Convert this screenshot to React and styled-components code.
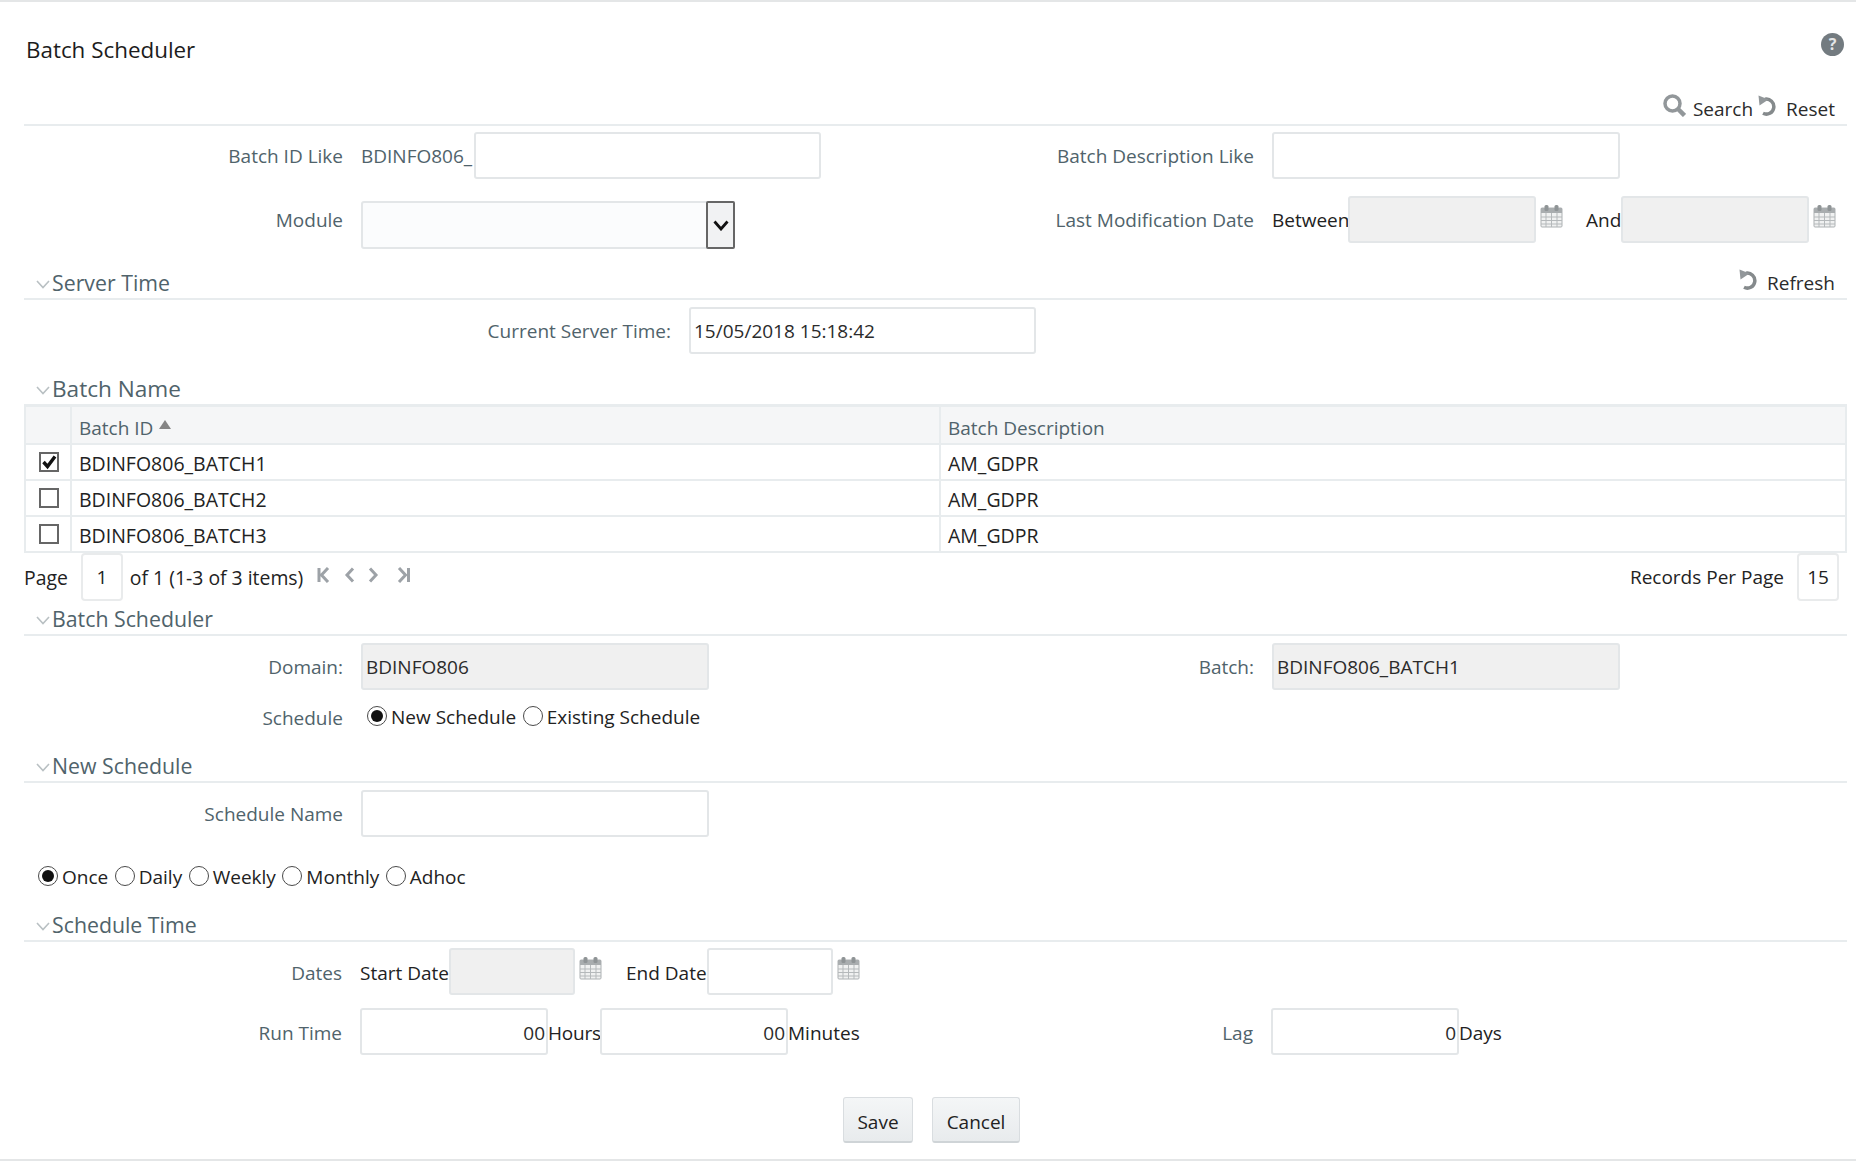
import React from 'react';
import styled, { createGlobalStyle } from 'styled-components';

const GlobalStyle = createGlobalStyle`
  html, body { margin: 0; padding: 0; background: #fff; }
  body { font-family: "Open Sans", "Noto Sans", sans-serif; font-size: 19px; color: #222; }
`;

const slate = '#50636b';
const line = '#e8ecee';

const Page = styled.div`
  box-sizing: border-box;
  height: 1161px;
  padding: 0 9px 0 24px;
  border-top: 2px solid #e4e6e7;
  border-bottom: 2px solid #e4e6e7;
  overflow: hidden;
`;

const TitleBar = styled.div`
  display: flex;
  justify-content: space-between;
  height: 90px;
  padding-left: 2px;
`;

const Title = styled.h1`
  margin: 30px 0 0;
  font-size: 22.4px;
  font-weight: 400;
  line-height: 36px;
  color: #1c1c1c;
`;

const HelpIcon = styled.svg`
  width: 23px;
  height: 23px;
  margin: 31px 3px 0 0;
`;

const Toolbar = styled.div`
  box-sizing: border-box;
  display: flex;
  justify-content: flex-end;
  align-items: center;
  gap: 5px;
  height: 34px;
  padding: 2px 12px 0 0;
  border-bottom: 2px solid ${line};
`;

const ToolButton = styled.span`
  display: inline-flex;
  align-items: center;
  gap: 7px;
  color: #2b2b2b;
  line-height: 28px;
  svg { margin-top: -7px; }
`;

const SectionHead = styled.div`
  display: flex;
  align-items: center;
  height: 30px;
  margin-top: ${p => p.$top}px;
  padding-left: 12px;
  border-bottom: ${p => (p.$flush ? 'none' : `2px solid ${line}`)};
`;

const SectionTitle = styled.h2`
  flex: 1;
  margin: 0;
  font-size: ${p => p.$size || 21.3}px;
  font-weight: 400;
  color: ${slate};
  line-height: 30px;
`;

const Chevron = styled.svg`
  width: 14px;
  height: 9px;
  margin: 3px 2px 0 0;
`;

const RefreshSlot = styled.span`
  margin-right: 12px;
`;

const FormRow = styled.div`
  display: grid;
  grid-template-columns: ${p => p.$columns || '319px 575px 300px 1fr'};
  column-gap: 18px;
  align-items: start;
  margin-top: ${p => p.$top}px;
  ${p => p.$low && `
    label, > div { line-height: 51px; }
    > div > div { line-height: 47px; }
  `}
`;

const Label = styled.label`
  display: block;
  height: ${p => p.$height || 47}px;
  text-align: right;
  color: ${slate};
  line-height: ${p => (p.$height || 47) + 2}px;
`;

const Inline = styled.div`
  display: flex;
  align-items: flex-start;
  height: 47px;
  line-height: 49px;
  color: ${p => p.$color || '#222'};
`;

const Field = styled.div`
  box-sizing: border-box;
  flex: none;
  width: ${p => p.$width || 348}px;
  height: 47px;
  padding: ${p => (p.$align === 'right' ? '0 1px 0 3px' : '0 3px')};
  border: 2px solid #e3e6e8;
  border-radius: 3px;
  background: ${p => (p.$disabled ? '#f0f0f0' : '#fff')};
  color: #2b2b2b;
  line-height: 45px;
  text-align: ${p => p.$align || 'left'};
`;

const SelectBox = styled.div`
  box-sizing: border-box;
  display: flex;
  justify-content: flex-end;
  width: 374px;
  height: 48px;
  margin-top: 5px;
  border: 2px solid #e3e6e8;
  border-radius: 3px;
  background: #fbfcfd;
`;

const SelectArrow = styled.div`
  box-sizing: border-box;
  display: flex;
  align-items: center;
  justify-content: center;
  width: 29px;
  margin: -2px -2px -2px 0;
  border: 2px solid #666;
  border-radius: 2px;
  background: #f1f2f3;
`;

const CalendarWrap = styled.svg`
  flex: none;
  width: 23px;
  height: 24px;
  margin: 8px 0 0 4px;
`;

const Gapped = styled.span`
  margin-left: ${p => p.$left}px;
`;

const Unit = styled.span`
  flex: none;
  width: ${p => p.$width}px;
  letter-spacing: ${p => p.$tight || 0}px;
  white-space: nowrap;
`;

const Table = styled.table`
  box-sizing: border-box;
  width: 1823px;
  border-collapse: collapse;
  border: 2px solid ${line};
  border-top-width: 3px;
  table-layout: fixed;
`;

const HeadCell = styled.th`
  height: 30px;
  padding: 6px 7px 0;
  font-weight: 400;
  text-align: left;
  color: ${slate};
  background: #f5f6f7;
  border: 2px solid ${line};
`;

const Cell = styled.td`
  height: 30px;
  padding: 4px 7px 0;
  font-size: 19.5px;
  line-height: 26px;
  color: #222;
  border: 2px solid ${line};
`;

const CheckBox = styled.span`
  box-sizing: border-box;
  display: block;
  width: 20px;
  height: 20px;
  margin: -4px 0 0 6px;
  border: 2px solid #666;
  background: #fff;
  svg { display: block; }
`;

const SortMark = styled.span`
  display: inline-block;
  width: 0;
  height: 0;
  margin: 0 0 6px 6px;
  border-left: 6px solid transparent;
  border-right: 6px solid transparent;
  border-bottom: 9px solid #858585;
`;

const Pager = styled.div`
  display: flex;
  align-items: center;
  height: 48px;
  padding-right: 8px;
  font-size: 19.4px;
`;

const RecordsLabel = styled.span`
  font-size: 19px;
`;

const PagerBox = styled.div`
  box-sizing: border-box;
  width: ${p => p.$width}px;
  height: 48px;
  margin: ${p => p.$margin};
  border: 2px solid #e9ebec;
  border-radius: 4px;
  font-size: 19px;
  line-height: 45px;
  text-align: center;
`;

const GlyphSvg = styled.svg`
  flex: none;
  width: 14px;
  height: 16px;
  margin: -4px 0 0 ${p => p.$left}px;
`;

const Spacer = styled.span`
  flex: 1;
`;

const RadioRow = styled.div`
  display: flex;
  align-items: center;
  gap: 6.5px;
  height: 40px;
  margin-top: ${p => p.$top || 0}px;
  padding-left: ${p => p.$left || 0}px;
  color: #222;
`;

const RadioOption = styled.span`
  display: inline-flex;
  align-items: center;
  gap: 4px;
`;

const RadioDot = styled.span`
  box-sizing: border-box;
  display: inline-flex;
  align-items: center;
  justify-content: center;
  width: 20px;
  height: 20px;
  margin-top: -3px;
  border: 1.5px solid #4a4a4a;
  border-radius: 50%;
  &::after {
    content: '';
    display: ${p => (p.$on ? 'block' : 'none')};
    width: 12px;
    height: 12px;
    border-radius: 50%;
    background: #111;
  }
`;

const Buttons = styled.div`
  display: flex;
  gap: 19px;
  margin: 42px 0 0 819px;
`;

const Button = styled.button`
  box-sizing: border-box;
  width: ${p => p.$width}px;
  height: 46px;
  padding: 4px 0 0;
  border: 1px solid #d9dde0;
  border-bottom: 2px solid #cfd4d7;
  border-radius: 3px;
  background: linear-gradient(#f4f6f7, #e8ebed);
  color: #222;
  font: inherit;
`;

const ChevronIcon = () => (
  <Chevron viewBox="0 0 14 9"><path d="M1 1l6 6.500L13 1" fill="none" stroke="#b9c0c3" strokeWidth="1.600" /></Chevron>
);

const UndoIcon = () => (
  <svg width="21" height="21" viewBox="0 0 21 21">
    <path d="M7 4.200A7.500 7.500 0 1 1 5 18.300" fill="none" stroke="#858a8c" strokeWidth="3.500" />
    <path d="M0.500 0.500L1.500 10.500 10.500 4.500z" fill="#92979a" />
  </svg>
);

const Calendar = () => (
  <CalendarWrap viewBox="0 0 23 24">
    <rect x="1" y="4" width="21" height="19" rx="1" fill="#f0f1f1" stroke="#adb1b3" />
    <rect x="1" y="4" width="21" height="5" fill="#a9adaf" />
    <rect x="4.500" y="1" width="4" height="6" rx="1.500" fill="#8f9496" />
    <rect x="14.500" y="1" width="4" height="6" rx="1.500" fill="#8f9496" />
    <path d="M1 13h21M1 16.500h21M1 20h21M6 9v14M11.500 9v14M17 9v14" stroke="#b5b9bb" strokeWidth="1" />
  </CalendarWrap>
);

const PagerGlyph = ({ d, left }) => (
  <GlyphSvg $left={left} viewBox="0 0 14 16"><path d={d} fill="none" stroke="#9da2a7" strokeWidth="3" /></GlyphSvg>
);

const Radio = ({ on, children }) => (
  <RadioOption><RadioDot $on={on} />{children}</RadioOption>
);

const rows = [
  { id: 'BDINFO806_BATCH1', checked: true },
  { id: 'BDINFO806_BATCH2' },
  { id: 'BDINFO806_BATCH3' },
];

export default function App() {
  return (
    <Page>
      <GlobalStyle />
      <TitleBar>
        <Title>Batch Scheduler</Title>
        <HelpIcon viewBox="0 0 23 23">
          <circle cx="11.500" cy="11.500" r="11.500" fill="#737b80" />
          <text x="11.500" y="17" textAnchor="middle" fontSize="16" fontWeight="700" fill="#e4e6e7" fontFamily="Open Sans">?</text>
        </HelpIcon>
      </TitleBar>
      <Toolbar>
        <ToolButton>
          <svg width="23" height="23" viewBox="0 0 23 23">
            <circle cx="9.500" cy="9.500" r="7.500" fill="none" stroke="#92979a" strokeWidth="3.500" />
            <path d="M14.500 14.500l7 7" stroke="#92979a" strokeWidth="4.500" />
          </svg>
          Search
        </ToolButton>
        <ToolButton><UndoIcon />Reset</ToolButton>
      </Toolbar>

      <FormRow $top={6}>
        <Label>Batch ID Like</Label>
        <Inline $color={slate}><Unit $width={113}>BDINFO806_</Unit><Field $width={347} /></Inline>
        <Label>Batch Description Like</Label>
        <Field />
      </FormRow>
      <FormRow $top={17}>
        <Label>Module</Label>
        <SelectBox>
          <SelectArrow>
            <svg width="16" height="11" viewBox="0 0 16 11"><path d="M1.500 1.500L8 9l6.500-7.500" fill="none" stroke="#111" strokeWidth="2.800" /></svg>
          </SelectArrow>
        </SelectBox>
        <Label>Last Modification Date</Label>
        <Inline>
          <Unit $width={76}>Between</Unit><Field $width={188} $disabled /><Calendar />
          <Gapped $left={23}>And</Gapped><Field $width={188} $disabled /><Calendar />
        </Inline>
      </FormRow>

      <SectionHead $top={19}>
        <ChevronIcon />
        <SectionTitle>Server Time</SectionTitle>
        <RefreshSlot><ToolButton><UndoIcon />Refresh</ToolButton></RefreshSlot>
      </SectionHead>
      <FormRow $top={7} $columns="647px 347px">
        <Label>Current Server Time:</Label>
        <Field $width={347}>15/05/2018 15:18:42</Field>
      </FormRow>

      <SectionHead $top={20} $flush>
        <ChevronIcon />
        <SectionTitle $size={22.6}>Batch Name</SectionTitle>
      </SectionHead>
      <Table>
        <colgroup>
          <col style={{ width: 46 }} />
          <col style={{ width: 869 }} />
          <col />
        </colgroup>
        <thead>
          <tr>
            <HeadCell />
            <HeadCell>Batch ID<SortMark /></HeadCell>
            <HeadCell>Batch Description</HeadCell>
          </tr>
        </thead>
        <tbody>
          {rows.map(r => (
            <tr key={r.id}>
              <Cell>
                <CheckBox>
                  {r.checked && (
                    <svg width="16" height="16" viewBox="0 0 16 16"><path d="M2.500 8l4 4.500L14 2.500" fill="none" stroke="#111" strokeWidth="3.400" /></svg>
                  )}
                </CheckBox>
              </Cell>
              <Cell>{r.id}</Cell>
              <Cell>AM_GDPR</Cell>
            </tr>
          ))}
        </tbody>
      </Table>
      <Pager>
        Page
        <PagerBox $width={42} $margin="0 7px 0 13px">1</PagerBox>
        of 1 (1-3 of 3 items)
        <PagerGlyph left={13} d="M3 1v14M12 1L5.500 8l6.500 7" />
        <PagerGlyph left={13} d="M10 1.500L4 8l6 6.500" />
        <PagerGlyph left={9} d="M4 1.500L10 8l-6 6.500" />
        <PagerGlyph left={17} d="M11.500 1v14M2 1l6.500 7L2 15" />
        <Spacer />
        <RecordsLabel>Records Per Page</RecordsLabel>
        <PagerBox $width={42} $margin="0 0 0 13px">15</PagerBox>
      </Pager>

      <SectionHead $top={3}>
        <ChevronIcon />
        <SectionTitle>Batch Scheduler</SectionTitle>
      </SectionHead>
      <FormRow $top={7}>
        <Label>Domain:</Label>
        <Field $disabled>BDINFO806</Field>
        <Label>Batch:</Label>
        <Field $disabled>BDINFO806_BATCH1</Field>
      </FormRow>
      <FormRow $top={7}>
        <Label $height={40}>Schedule</Label>
        <RadioRow $left={6}>
          <Radio on>New Schedule</Radio>
          <Radio>Existing Schedule</Radio>
        </RadioRow>
      </FormRow>

      <SectionHead $top={14}>
        <ChevronIcon />
        <SectionTitle>New Schedule</SectionTitle>
      </SectionHead>
      <FormRow $top={7}>
        <Label>Schedule Name</Label>
        <Field />
      </FormRow>
      <RadioRow $top={20} $left={14}>
        <Radio on>Once</Radio>
        <Radio>Daily</Radio>
        <Radio>Weekly</Radio>
        <Radio>Monthly</Radio>
        <Radio>Adhoc</Radio>
      </RadioRow>

      <SectionHead $top={13}>
        <ChevronIcon />
        <SectionTitle>Schedule Time</SectionTitle>
      </SectionHead>
      <FormRow $top={6} $columns="318px 575px 300px 1fr" $low>
        <Label>Dates</Label>
        <Inline>
          Start Date<Field $width={126} $disabled /><Calendar />
          <Gapped $left={24}>End Date</Gapped><Field $width={126} /><Calendar />
        </Inline>
      </FormRow>
      <FormRow $top={13} $columns="318px 575px 300px 1fr" $low>
        <Label>Run Time</Label>
        <Inline>
          <Field $width={188} $align="right">00</Field><Unit $width={52} $tight={-0.2}>Hours</Unit>
          <Field $width={188} $align="right">00</Field><Unit $width={72}>Minutes</Unit>
        </Inline>
        <Label>Lag</Label>
        <Inline><Field $width={188} $align="right">0</Field><Unit $width={50}>Days</Unit></Inline>
      </FormRow>

      <Buttons>
        <Button $width={70}>Save</Button>
        <Button $width={88}>Cancel</Button>
      </Buttons>
    </Page>
  );
}
